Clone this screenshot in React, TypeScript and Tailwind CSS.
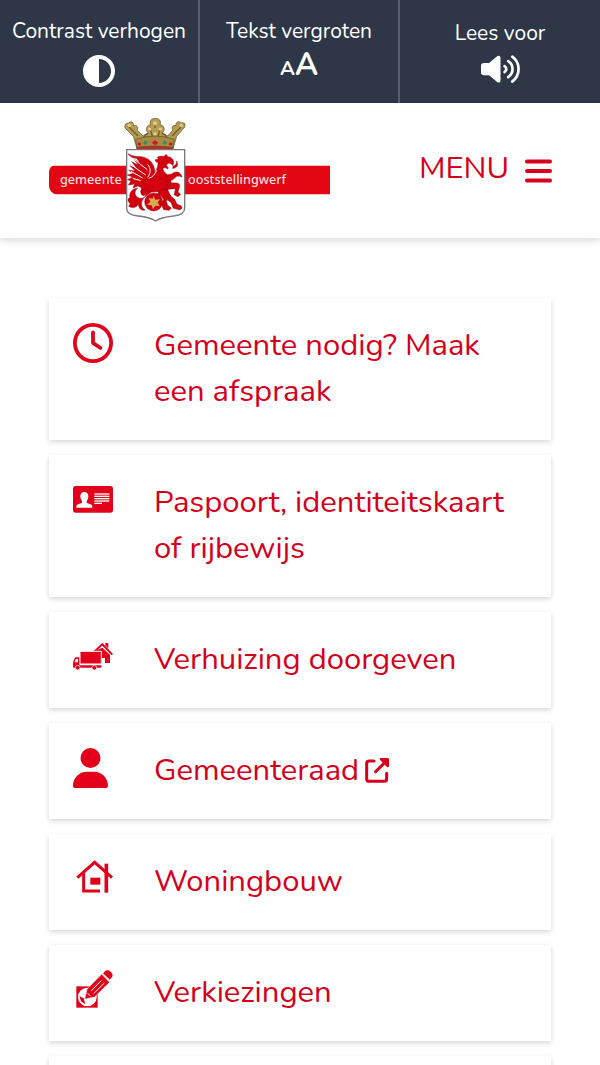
import type { ComponentType, ReactNode } from "react"
import { FaCircleHalfStroke, FaRegClock, FaUser } from "react-icons/fa6"

interface IconProps {
  className?: string
}

interface LinkCardProps {
  title?: string
  icon?: ComponentType<IconProps>
  iconClass?: string
  external?: boolean
}

function SpeakerIcon({ className }: IconProps) {
  return (
    <svg viewBox="0 0 116 84" className={className} aria-hidden="true">
      <path
        fill="currentColor"
        d="M9 24h15L48 4c4-4 10-2 10 4v68c0 6-6 8-10 4L24 60H9C3 60 0 57 0 52V32c0-5 3-8 9-8Z"
      />
      <g fill="none" stroke="currentColor" strokeWidth="8" strokeLinecap="round">
        <path d="M70 33c7 4 7 14 0 18" />
        <path d="M81 18c17 11 17 37 0 48" />
        <path d="M93 5c25 18 25 56 0 74" />
      </g>
    </svg>
  )
}

function MenuIcon({ className }: IconProps) {
  return (
    <svg viewBox="0 0 27 24" className={className} aria-hidden="true">
      <path
        d="M2 2.5h23M2 12h23M2 21.5h23"
        stroke="currentColor"
        strokeWidth="4"
        strokeLinecap="round"
      />
    </svg>
  )
}

function IdCardIcon({ className }: IconProps) {
  return (
    <svg viewBox="0 0 120 80" className={className} aria-hidden="true">
      <rect width="120" height="80" rx="8" fill="currentColor" />
      <g fill="#fff">
        <path d="M34 18c8 0 12 5 12 13 0 6-2 10-5 14v5c6 3 15 5 17 9v6H10v-6c2-4 11-6 17-9v-5c-3-4-5-8-5-14 0-8 4-13 12-13Z" />
        <rect x="64" y="22" width="45" height="4" />
        <rect x="64" y="29" width="45" height="4" />
        <rect x="64" y="36" width="45" height="4" />
        <rect x="64" y="43" width="45" height="4" />
        <rect x="64" y="50" width="23" height="4" />
      </g>
    </svg>
  )
}

function MovingIcon({ className }: IconProps) {
  return (
    <svg viewBox="0 0 120 82" className={className} aria-hidden="true">
      <g fill="currentColor">
        <path d="M72 22 88 14l23 21v25H96V45h-9v15H72Z" />
        <path d="M97 0h9v16l-9-8Z" />
        <path d="m64 26 24-22 30 31" fill="none" stroke="currentColor" strokeWidth="6" />
        <path d="M21 25h64v38H21Z" stroke="#fff" strokeWidth="3" />
        <path d="M7 43h12v24h66v7H3c-3 0-3-3-3-6 0-9 2-19 7-25Z" />
        <circle cx="14" cy="74" r="7" stroke="#fff" strokeWidth="2" />
        <circle cx="64" cy="74" r="7" stroke="#fff" strokeWidth="2" />
      </g>
      <path d="M8 48h7v10H5Z" fill="#fff" />
    </svg>
  )
}

function HouseIcon({ className }: IconProps) {
  return (
    <svg viewBox="0 0 120 106" className={className} aria-hidden="true">
      <g fill="none" stroke="currentColor" strokeWidth="9">
        <path d="M13 56 65 10l52 46" />
        <path d="M32 40v56h49" />
        <path d="M100 14v87" strokeWidth="11" />
      </g>
      <rect x="52" y="56" width="30" height="21" fill="currentColor" />
    </svg>
  )
}

function PencilIcon({ className }: IconProps) {
  return (
    <svg viewBox="0 0 120 114" className={className} aria-hidden="true">
      <path fill="currentColor" d="M10 49h64v64H10Z" />
      <circle cx="43" cy="81" r="28" fill="#fff" />
      <path d="m19 78 13 7 5 18-13-9Z" fill="currentColor" />
      <g fill="currentColor" stroke="#fff" strokeWidth="2">
        <path d="M35 88 42 57 86 12l24 25-45 44Z" />
        <path d="m89 10 6-6c6-6 12-6 17-1l4 5c5 5 5 11 0 16l-6 6Z" />
      </g>
      <path d="m54 63 32-32m-24 40 32-32" stroke="#fff" strokeWidth="3" />
      <path d="m44 70 8 8" stroke="#fff" strokeWidth="3" />
    </svg>
  )
}

function ExternalIcon({ className }: IconProps) {
  return (
    <svg viewBox="0 0 72 75" className={className} aria-hidden="true">
      <g fill="none" stroke="currentColor" strokeWidth="9" strokeLinecap="round" strokeLinejoin="round">
        <path d="M27 9H13c-5 0-8 3-8 8v45c0 5 3 8 8 8h44c5 0 8-3 8-8V46" />
        <path d="M32 41 59 14" />
      </g>
      <path
        d="M48 0h20c2 0 4 2 4 4v20c0 4-4 5-6 3L46 7c-3-3-2-7 2-7Z"
        fill="currentColor"
      />
    </svg>
  )
}

function Logo() {
  return (
    <svg viewBox="27 39 843 312" className="w-[281px]" role="img" aria-label="gemeente Ooststellingwerf">
      <path d="M42 182H870v86H54c-18 0-27-12-27-29v-36c0-11 5-21 15-21Z" fill="#e30613" />
      <g fill="#ffdcdc" fontFamily="'Noto Sans', 'Open Sans', sans-serif" fontSize="38" fontWeight="500">
        <text x="60" y="236">gemeente</text>
        <text x="444" y="236">ooststellingwerf</text>
      </g>

      {/* Crown */}
      <g stroke="#5a4d28" strokeWidth="2">
        <path
          d="M291 131 280 94 260 74c-10-7-6-21 5-19 7-9 18-3 15 7 11-3 17 6 11 13l18 18 16-9c-11-10-4-26 7-24-5-13 3-20 14-20s19 7 14 20c11-2 18 14 7 24l16 9 16-18c-6-8 0-16 9-13-2-11 9-16 16-8 11-5 16 9 6 17l-20 23-11 37Z"
          fill="#b69b52"
        />
        <path d="M287 103q58-20 116 0l-5 28H291Z" fill="#a78b43" />
        <path d="M291 127q54-8 107 0v6H291Z" fill="#c52b28" />
      </g>
      <g fill="none" stroke="#6d5c2f" strokeWidth="4">
        <path d="m267 66 27 27M423 66l-27 27M329 66l8 28m25-28-8 28M345 50v18" />
        <path d="M311 98q4-12 15-12m54 12q-4-12-15-12" />
      </g>
      <g fill="#e2cd82">
        <circle cx="268" cy="61" r="5" />
        <circle cx="345" cy="55" r="6" />
        <circle cx="329" cy="72" r="5" />
        <circle cx="361" cy="72" r="5" />
        <circle cx="424" cy="61" r="5" />
        <circle cx="345" cy="86" r="5" />
      </g>
      <path d="m345 105 10 8-10 8-10-8Z" fill="#d51425" />
      <path d="m316 106 7 7-7 7-7-7Zm58 0 7 7-7 7-7-7Z" fill="#34905a" />
      <circle cx="298" cy="117" r="5" fill="#d51425" />
      <circle cx="392" cy="117" r="5" fill="#d51425" />

      {/* Shield */}
      <path
        d="M260 134H434V310c0 14-12 21-33 23-28 3-43 6-54 15-12-9-26-12-53-15-23-2-34-9-34-23Z"
        fill="#fff"
        stroke="#77797b"
        strokeWidth="4"
      />

      {/* Griffin */}
      <g fill="#d5000f" stroke="#870b13" strokeWidth="1.5" strokeLinejoin="round">
        {/* Wing */}
        <path d="M264 146c12 8 25 8 39 9 20 2 34 15 39 32 5 16 3 30-7 42l-26 20-16-6-14 6 5-12-19 3 8-12-10-4 15-8-16-6 19-5-15-9 20 2-16-16 20 7-15-19 19 10-12-18 19 13-11-15c-12-1-21-6-26-14Z" />
        {/* Head, neck and body */}
        <path d="M352 157c7-5 15-3 21-3l5-6 6 7c10 1 16 7 17 15l-2 12c-4-6-9-8-14-7l-7 6c5 3 7 7 6 11-6-4-11-5-15-3-1 8 5 13 11 19 12 12 17 25 10 38-7 13-24 17-40 14l-30 2c-14-2-22-15-14-27 8-12 27-16 36-29 9-13 13-22 12-34-6 0-9-4-8-8l9-1Z" />
        <path d="M399 184c8-2 12-8 11-16 7 12 0 22-12 22Z" />
        {/* Front legs */}
        <path d="m377 211 18-4c6-5 11-6 19-6l8 6 4 9-8-3-8 1-13 11-17 2Z" />
        <path d="m378 233 28 1c10 0 15 4 12 13l-4 14 8 7-8 7-11-5 3-19-24 2Z" />
        {/* Tail */}
        <path d="M318 250c-14-1-18 6-15 15 2 9 12 8 16 1-3 14-18 18-28 10-9-8-7-20 2-27-18 2-27 16-23 30-9-1-7 12 1 17l-5 8c12 7 23 4 29-6 1 12 9 20 20 17-17-10-12-34 6-44l12-10Z" />
        {/* Hind legs */}
        <path d="M360 254h23l9 19-13 16 4 12 11 8-6 7-17-2-6-14 6-17-9-11-13 1Z" />
        <path d="m389 271 15 12 7 15 12 4c5 5 2 12-5 12l-18-4-6-16-11-9Z" />
        <circle cx="341" cy="291" r="27" />
      </g>
      <path
        d="m282 163 40 31m-48-14 43 30m-44-11 35 20m-30 1 24 7m21-49c10 11 10 26 0 39m3 3c12-3 19-12 24-24"
        fill="none"
        stroke="#fff"
        strokeWidth="3"
      />
      <path d="m341 273 5 11 14-1-7 9 6 12-13-2-7 11-4-12-14-2 10-9-5-12 12 3Z" fill="#d4ac52" />
    </svg>
  )
}

function ToolButton({ label, children, className = "" }: { label: string; children: ReactNode; className?: string }) {
  return (
    <button type="button" className={`flex flex-col items-center text-white ${className}`}>
      <span className="whitespace-nowrap text-[21px] leading-6">{label}</span>
      {children}
    </button>
  )
}

function LinkCard({ title, icon: Icon, iconClass, external }: LinkCardProps) {
  return (
    <li className="bg-white shadow-[0_2px_5px_rgba(0,0,0,0.16)]">
      <a href="#" className="flex min-h-24 items-start px-6 pt-6 pb-[26px]">
        <span className="w-[81px] shrink-0 pt-px text-[#e2001a]">{Icon && <Icon className={iconClass} />}</span>
        <span className="text-[31px] leading-[46px]">
          {title}
          {external && <ExternalIcon className="ml-[6px] inline-block w-6 align-[-3px]" />}
        </span>
      </a>
    </li>
  )
}

const links: LinkCardProps[] = [
  { title: "Gemeente nodig? Maak een afspraak", icon: FaRegClock, iconClass: "size-10" },
  { title: "Paspoort, identiteitskaart of rijbewijs", icon: IdCardIcon, iconClass: "mt-[6px] w-10" },
  { title: "Verhuizing doorgeven", icon: MovingIcon, iconClass: "mt-[6px] w-10" },
  { title: "Gemeenteraad", icon: FaUser, iconClass: "h-10 w-[35px]", external: true },
  { title: "Woningbouw", icon: HouseIcon, iconClass: "w-10" },
  { title: "Verkiezingen", icon: PencilIcon, iconClass: "w-10" },
  {},
]

export default function App() {
  return (
    <div className="h-screen overflow-hidden bg-white font-['Nunito','Lato',sans-serif] text-[#d6001c]">
      <div className="grid grid-cols-3 bg-[#2d3748]">
        <ToolButton label="Contrast verhogen" className="gap-3 border-r-2 border-[#566071] pt-[19px] pb-4">
          <FaCircleHalfStroke className="size-8" />
        </ToolButton>
        <ToolButton label="Tekst vergroten" className="gap-[6px] border-r-2 border-[#566071] pt-[19px]">
          <span className="text-[20px] font-bold leading-8">
            A<span className="text-[31px]">A</span>
          </span>
        </ToolButton>
        <ToolButton label="Lees voor" className="gap-[10px] pt-[21px]">
          <SpeakerIcon className="w-[39px]" />
        </ToolButton>
      </div>

      <header className="flex items-center justify-between pt-[15px] pr-12 pb-4 pl-[49px] shadow-[0_2px_8px_rgba(0,0,0,0.16)]">
        <a href="#">
          <Logo />
        </a>
        <button type="button" className="flex items-end gap-4 pb-1 text-[31px] leading-[30px]">
          MENU
          <MenuIcon className="w-[27px]" />
        </button>
      </header>

      <main className="px-[49px] pt-[60px]">
        <ul className="flex flex-col gap-[15px]">
          {links.map((link, index) => (
            <LinkCard key={index} {...link} />
          ))}
        </ul>
      </main>
    </div>
  )
}
